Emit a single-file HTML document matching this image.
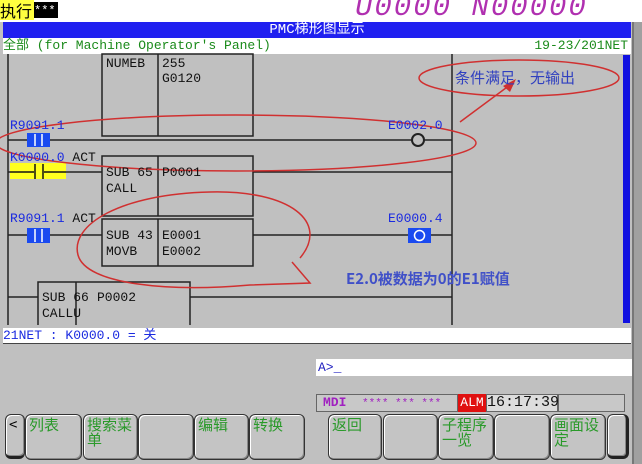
<!DOCTYPE html>
<html><head><meta charset="utf-8"><style>
body{margin:0;width:642px;height:464px;overflow:hidden;background:#c0c0c0;position:relative;font-family:"Liberation Mono","Noto Sans CJK SC",monospace;}
div{position:absolute;box-sizing:border-box}
.m{font-family:"Liberation Mono","Noto Sans CJK SC",monospace;font-size:13px;line-height:14px;white-space:pre;color:#111}
.k{background:#c4c4c4;border:1px solid #333;border-radius:6px;color:#2a9a2a;font-family:"Noto Sans CJK SC",sans-serif;font-size:15px;line-height:15px;padding:2px 0 0 3px;box-shadow:inset -1px -1px 0 #888,inset 1px 1px 0 #fff}
</style></head><body>
<div style="left:0;top:0;width:642px;height:22px;background:#fff"></div>
<div style="left:0;top:0;width:34px;height:20px;background:#ffff40;font:16px 'Noto Sans CJK SC',sans-serif;line-height:20px;color:#000">执行</div>
<div style="left:34px;top:2px;width:24px;height:16px;background:#000;color:#fff;font:12px 'Liberation Mono';line-height:18px">***</div>
<div style="left:355px;top:-6px;width:290px;height:28px;color:#b030b0;font:29px 'Liberation Mono',monospace;line-height:28px;letter-spacing:2px;white-space:pre;font-style:italic">U0000 N00000</div>
<div style="left:632px;top:22px;width:10px;height:442px;background:#a0a0a0;border-left:2px solid #777"></div>
<div style="left:3px;top:22px;width:628px;height:16px;background:#2020f0;color:#fff;font:14px 'Liberation Mono','Noto Sans CJK SC';line-height:16px;text-align:center">PMC梯形图显示</div>
<div style="left:3px;top:38px;width:628px;height:16px;background:#fff;color:#1a8a1a;font:13px 'Liberation Mono','Noto Sans CJK SC';line-height:16px;white-space:pre">全部 (for Machine Operator's Panel)<span style="position:absolute;right:3px">19-23/201NET</span></div>
<div style="left:623px;top:55px;width:7px;height:268px;background:#1010e0"></div>
<svg style="position:absolute;left:0;top:0" width="642" height="464">
<g stroke="#222" stroke-width="1.5" fill="none">
<line x1="8" y1="54" x2="8" y2="325"/><line x1="452" y1="54" x2="452" y2="325"/>
<rect x="102" y="54" width="151" height="82"/><line x1="158" y1="54" x2="158" y2="136"/>
<line x1="8" y1="140" x2="412" y2="140"/><line x1="424" y1="140" x2="452" y2="140"/>
<circle cx="418" cy="140" r="6" stroke-width="2"/>
<line x1="8" y1="172" x2="102" y2="172"/><line x1="253" y1="172" x2="452" y2="172"/>
<rect x="102" y="156" width="151" height="60"/><line x1="158" y1="156" x2="158" y2="216"/>
<line x1="8" y1="235" x2="102" y2="235"/><line x1="253" y1="235" x2="452" y2="235"/>
<rect x="102" y="219" width="151" height="47"/><line x1="158" y1="219" x2="158" y2="266"/>
<line x1="8" y1="297" x2="38" y2="297"/><line x1="190" y1="297" x2="452" y2="297"/>
<path d="M38 325V282H190V325M76 282V325"/>
</g>
<rect x="27" y="133" width="23" height="14" fill="#1a4af0"/>
<rect x="10" y="163" width="56" height="16" fill="#ffff20"/>
<g stroke="#111" stroke-width="1.5"><line x1="10" y1="172" x2="34" y2="172"/><line x1="44" y1="172" x2="66" y2="172"/><line x1="35" y1="164" x2="35" y2="179"/><line x1="43" y1="164" x2="43" y2="179"/></g>
<rect x="27" y="228" width="23" height="15" fill="#1a4af0"/>
<rect x="408" y="228" width="23" height="15" fill="#1a4af0"/>
<circle cx="419.5" cy="235.5" r="5" stroke="#fff" stroke-width="1.5" fill="none"/>
<g stroke="#fff" stroke-width="1.5"><line x1="35" y1="134" x2="35" y2="146"/><line x1="42" y1="134" x2="42" y2="146"/><line x1="35" y1="229" x2="35" y2="242"/><line x1="42" y1="229" x2="42" y2="242"/></g>
<g stroke="#d03030" stroke-width="1.5" fill="none">
<ellipse cx="236" cy="143" rx="240" ry="28"/>
<ellipse cx="519" cy="78" rx="100" ry="18"/>
<path d="M300 258C330 222 290 190 210 192C120 194 70 225 78 255C86 285 170 292 250 285L310 283L292 262"/>
<line x1="460" y1="122" x2="510" y2="85"/>
</g>
<path d="M516 79L503 86L510 92Z" fill="#d03030"/>
</svg>
<div class="m" style="left:106px;top:57px">NUMEB</div>
<div class="m" style="left:162px;top:57px">255</div>
<div class="m" style="left:162px;top:72px">G0120</div>
<div style="left:455px;top:67px;font:15px 'Noto Sans CJK SC',sans-serif;color:#3040c0">条件满足，无输出</div>
<div class="m" style="left:10px;top:119px;color:#1a2ae0">R9091.1</div>
<div class="m" style="left:388px;top:119px;color:#1a2ae0">E0002.0</div>
<div class="m" style="left:10px;top:151px;color:#1a2ae0">K0000.0 <span style="color:#111">ACT</span></div>
<div class="m" style="left:106px;top:166px">SUB 65</div><div class="m" style="left:162px;top:166px">P0001</div>
<div class="m" style="left:106px;top:182px">CALL</div>
<div class="m" style="left:10px;top:212px;color:#1a2ae0">R9091.1 <span style="color:#111">ACT</span></div>
<div class="m" style="left:388px;top:212px;color:#1a2ae0">E0000.4</div>
<div class="m" style="left:106px;top:229px">SUB 43</div><div class="m" style="left:162px;top:229px">E0001</div>
<div class="m" style="left:106px;top:245px">MOVB</div><div class="m" style="left:162px;top:245px">E0002</div>
<div style="left:346px;top:268px;font:bold 15px 'Noto Sans CJK SC',sans-serif;color:#4050c8">E2.0被数据为0的E1赋值</div>
<div class="m" style="left:42px;top:291px">SUB 66</div><div class="m" style="left:97px;top:291px">P0002</div>
<div class="m" style="left:42px;top:307px">CALLU</div>
<div class="m" style="left:3px;top:328px;width:628px;height:16px;background:#fff;color:#1a2ae0;padding-top:1px;border-bottom:1px solid #444">21NET : K0000.0 = 关</div>
<div class="m" style="left:316px;top:359px;width:316px;height:17px;background:#fff;color:#2020c0;padding:2px 0 0 2px">A&gt;_</div>
<div style="left:316px;top:394px;width:142px;height:18px;background:#c8c8c8;border:1px solid #666;font:bold 13px 'Liberation Mono';color:#a020c0;line-height:16px;padding-left:6px;white-space:pre">MDI  <span style="font-weight:normal;font-size:11px">**** *** ***</span></div>
<div style="left:458px;top:394px;width:28px;height:18px;background:#e01010;color:#fff;font:13px 'Liberation Mono';line-height:17px;text-align:center">ALM</div>
<div style="left:486px;top:394px;width:72px;height:18px;background:#ddd;border:1px solid #666;font:15px 'Liberation Mono';line-height:16px;text-align:center;color:#111">16:17:39</div>
<div style="left:558px;top:394px;width:67px;height:18px;background:#c8c8c8;border:1px solid #666"></div>
<div class="k" style="left:5px;top:414px;width:20px;height:45px;color:#000;border-bottom:3px solid #222">&lt;</div>
<div class="k" style="left:25px;top:414px;width:57px;height:46px">列表</div>
<div class="k" style="left:83px;top:414px;width:55px;height:46px">搜索菜<br>单</div>
<div class="k" style="left:138px;top:414px;width:56px;height:46px"></div>
<div class="k" style="left:194px;top:414px;width:55px;height:46px">编辑</div>
<div class="k" style="left:249px;top:414px;width:56px;height:46px">转换</div>
<div class="k" style="left:328px;top:414px;width:54px;height:46px">返回</div>
<div class="k" style="left:383px;top:414px;width:55px;height:46px"></div>
<div class="k" style="left:438px;top:414px;width:56px;height:46px">子程序<br>一览</div>
<div class="k" style="left:494px;top:414px;width:56px;height:46px"></div>
<div class="k" style="left:550px;top:414px;width:56px;height:46px">画面设<br>定</div>
<div class="k" style="left:607px;top:414px;width:22px;height:45px;border-right:3px solid #222;border-bottom:3px solid #222"></div>
</body></html>
